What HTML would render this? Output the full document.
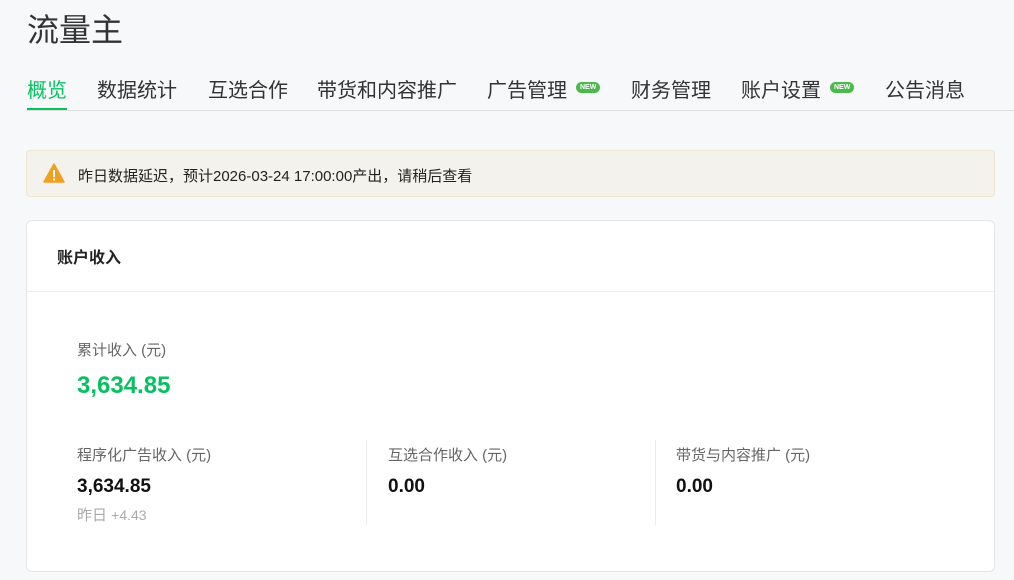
<!DOCTYPE html>
<html><head><meta charset="utf-8"><style>
*{margin:0;padding:0;box-sizing:border-box}
body{width:1014px;height:580px;overflow:hidden;background:#f7f8fa;font-family:"Liberation Sans","Noto Sans CJK SC",sans-serif;color:#333;position:relative}
.a{position:absolute;white-space:nowrap}
.title{left:27px;top:5px;font-size:32px;color:#333}
.tab{top:77px;font-size:20px;color:#333;line-height:28px}
.new{display:inline-block;background:#4cb94c;color:#fff;font-size:7px;font-weight:bold;border-radius:6px;padding:0 4px;height:11px;line-height:11px;vertical-align:top;margin-top:-2px}
.lbl{font-size:15px;color:#666}
.num{font-size:19px;font-weight:bold;color:#111}
</style></head><body>
<div class="a title">流量主</div>
<div class="a" style="left:27px;top:110px;width:987px;height:1px;background:#e0e0e0"></div>
<div class="a tab" style="left:27px;color:#07c160">概览</div>
<div class="a" style="left:27px;top:108px;width:40px;height:2px;background:#07c160"></div>
<div class="a tab" style="left:97px">数据统计</div>
<div class="a tab" style="left:208px">互选合作</div>
<div class="a tab" style="left:317px">带货和内容推广</div>
<div class="a tab" style="left:487px">广告管理</div>
<div class="a" style="left:576px;top:84px"><span class="new">NEW</span></div>
<div class="a tab" style="left:631px">财务管理</div>
<div class="a tab" style="left:741px">账户设置</div>
<div class="a" style="left:830px;top:84px"><span class="new">NEW</span></div>
<div class="a tab" style="left:885px">公告消息</div>

<div class="a" style="left:26px;top:150px;width:969px;height:47px;background:#f4f2ec;border:1px solid #efe6cf;border-radius:4px"></div>
<svg class="a" style="left:43px;top:163px" width="22" height="20" viewBox="0 0 22 20"><path d="M11 1 L21 19 L1 19 Z" fill="#f0a020" stroke="#f0a020" stroke-linejoin="round" stroke-width="1.5"/><rect x="10" y="7" width="2" height="7" fill="#fff"/><rect x="10" y="15.5" width="2" height="2" fill="#fff"/></svg>
<div class="a" style="left:78px;top:165px;font-size:15px;color:#222">昨日数据延迟，预计2026-03-24 17:00:00产出，请稍后查看</div>

<div class="a" style="left:26px;top:220px;width:969px;height:352px;background:#fff;border:1px solid #e6e6e6;border-radius:6px"></div>
<div class="a" style="left:27px;top:291px;width:967px;height:1px;background:#eeeeee"></div>
<div class="a" style="left:57px;top:244px;font-size:16px;font-weight:bold;color:#222">账户收入</div>
<div class="a lbl" style="left:77px;top:339px">累计收入 (元)</div>
<div class="a" style="left:77px;top:372px;font-size:24px;font-weight:bold;color:#07c160">3,634.85</div>

<div class="a" style="left:366px;top:440px;width:1px;height:85px;background:#ececec"></div>
<div class="a" style="left:655px;top:440px;width:1px;height:85px;background:#ececec"></div>
<div class="a lbl" style="left:77px;top:444px">程序化广告收入 (元)</div>
<div class="a num" style="left:77px;top:476px">3,634.85</div>
<div class="a" style="left:77px;top:504px;font-size:15px;color:#aaa">昨日 <span style="font-size:14px">+4.43</span></div>
<div class="a lbl" style="left:388px;top:444px">互选合作收入 (元)</div>
<div class="a num" style="left:388px;top:476px">0.00</div>
<div class="a lbl" style="left:676px;top:444px">带货与内容推广 (元)</div>
<div class="a num" style="left:676px;top:476px">0.00</div>
</body></html>
